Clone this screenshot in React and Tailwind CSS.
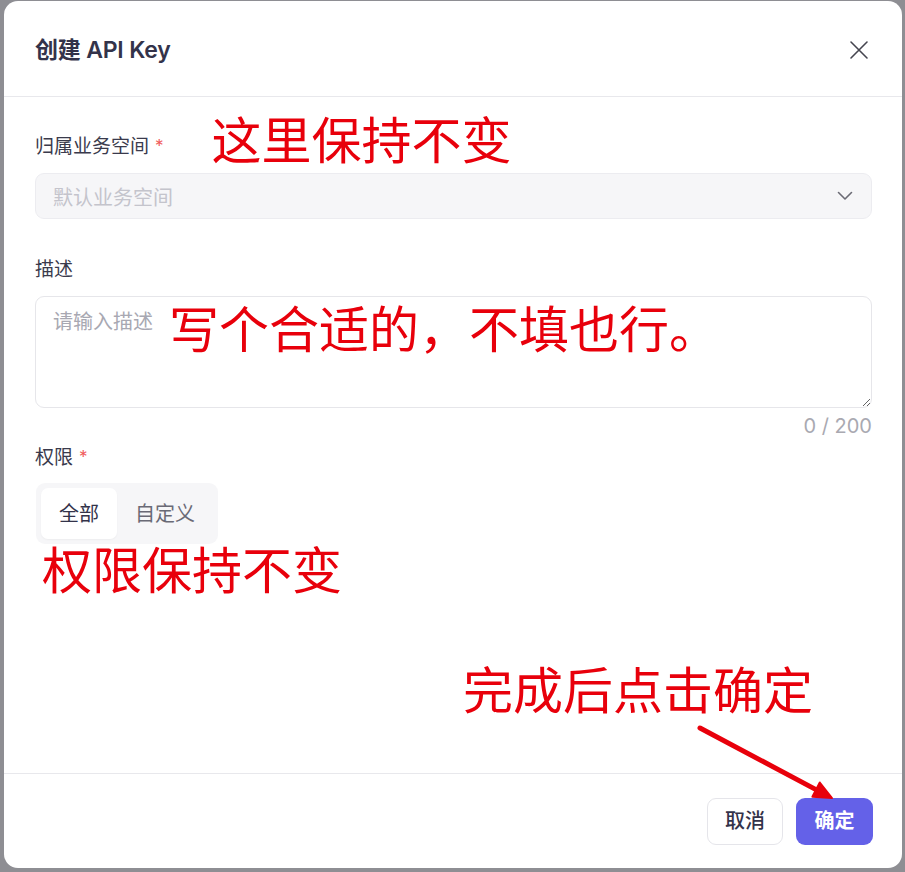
import React from "react";

const cjk = { fontFamily: '"Inter", "Noto Sans CJK SC", sans-serif' };

const Label = ({ text, required, children, className = "mb-[14px]" }) => (
  <div className={`flex items-center h-[28px] ${className}`}>
    <span className="text-[19px] text-[#3a3a4c]">{text}</span>
    {required && <span className="ml-[6px] text-[17px] text-[#f05a5a]">*</span>}
    {children}
  </div>
);

const Note = ({ children, className = "" }) => (
  <div
    className={`text-[50px] leading-none text-[#e8000b] whitespace-nowrap ${className}`}
    style={{ fontFamily: '"Noto Sans CJK SC", sans-serif' }}
  >
    {children}
  </div>
);

export default function App() {
  return (
    <div className="h-[872px] bg-[#8e8e93] pt-[1px] pb-[4px] pl-[4px] pr-[3px]" style={cjk}>
      <div className="relative h-full bg-white rounded-[14px] flex flex-col overflow-hidden">
        {/* header */}
        <div className="h-[96px] shrink-0 flex items-center justify-between pl-[31px] pr-[33px] border-b border-[#e8e8ec]">
          <h1 className="mt-[3px] text-[23px] font-semibold text-[#33334a] tracking-[-0.2px]">创建 API Key</h1>
          <button className="mt-[2px] text-[#45454f]">
            <svg width="20" height="20" viewBox="0 0 20 20" fill="none" stroke="currentColor" strokeWidth="1.6" strokeLinecap="round">
              <path d="M2 2L18 18M18 2L2 18" />
            </svg>
          </button>
        </div>

        {/* body */}
        <div className="flex-1 pt-[36px] pl-[31px] pr-[30px]">
          <Label text="归属业务空间" required className="mb-[12px]">
            <Note className="ml-[48px] -mt-[20px]">这里保持不变</Note>
          </Label>
          <div className="h-[46px] rounded-[9px] bg-[#f6f6f8] border border-[#ececf0] flex items-center justify-between pl-[17px] pr-[18px]">
            <span className="pt-[4px] text-[20px] text-[#c4c4cc]">默认业务空间</span>
            <svg width="16" height="10" viewBox="0 0 16 10" fill="none" stroke="#6b6b75" strokeWidth="1.6" strokeLinecap="round" strokeLinejoin="round">
              <path d="M1.5 1.5L8 8L14.5 1.5" />
            </svg>
          </div>

          <div className="mt-[37px]">
            <Label text="描述" className="mb-[12px]" />
          </div>
          <div className="relative">
            <textarea
              placeholder="请输入描述"
              className="block w-full h-[112px] rounded-[9px] border border-[#e6e6ea] bg-white pl-[17px] pt-[10px] text-[20px] text-[#33334a] placeholder:text-[#a8a8b2] outline-none resize-y"
              style={cjk}
            />
            <Note className="absolute left-[134px] top-[5px] pointer-events-none">写个合适的，不填也行。</Note>
          </div>
          <div className="mt-[4px] text-right text-[20px] leading-[28px] text-[#a9a9b1]">0 / 200</div>

          <div className="mt-[4px]">
            <Label text="权限" required className="mb-[13px]" />
          </div>
          <div className="inline-flex p-[5px] rounded-[9px] bg-[#f6f6f8] ml-[1px] -mt-[2px]">
            <button className="h-[51px] px-[18px] rounded-[7px] bg-white text-[20px] text-[#33334a] shadow-[0_1px_2px_rgba(0,0,0,0.04)]">全部</button>
            <button className="h-[51px] px-[18px] rounded-[7px] text-[20px] text-[#6a6a76]">自定义</button>
          </div>
          <Note className="ml-[7px] -mt-[2px]">权限保持不变</Note>

          <Note className="ml-[428px] mt-[70px]">完成后点击确定</Note>
        </div>

        <svg className="absolute left-[686px] top-[719px]" width="150" height="85" viewBox="0 0 150 85" fill="none">
          <path d="M10 8L126 69.6" stroke="#e8000b" strokeWidth="5" strokeLinecap="round" />
          <path d="M142 78L122.4 76.7L129.8 62.5Z" fill="#e8000b" stroke="#e8000b" strokeWidth="2" strokeLinejoin="round" />
        </svg>

        {/* footer */}
        <div className="h-[95px] shrink-0 border-t border-[#e8e8ec] flex items-center justify-end gap-[13px] pl-[31px] pr-[29px]">
          <button className="h-[47px] w-[76px] rounded-[9px] border border-[#e5e5ea] bg-white text-[20px] font-medium text-[#33334a]">取消</button>
          <button className="h-[47px] w-[77px] rounded-[9px] bg-[#6461e8] text-[20px] font-semibold text-white">确定</button>
        </div>
      </div>
    </div>
  );
}
